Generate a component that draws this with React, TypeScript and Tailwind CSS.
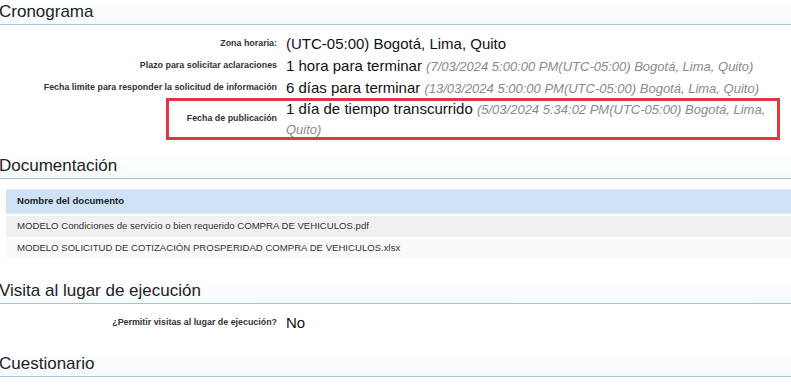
import React from "react";

const font = { fontFamily: '"Liberation Sans", Arial, sans-serif' };

function Title({ children }: { children: React.ReactNode }) {
  return (
    <div className="h-[25px] border-b border-[#9fc2cf] bg-gradient-to-b from-white to-[#f6fafc] text-[17px] leading-[24px] text-[#222] -ml-[1px]">
      {children}
    </div>
  );
}

function Row({ label, children }: { label: string; children: React.ReactNode }) {
  return (
    <div className="flex h-[22px] items-center">
      <div className="w-[277px] shrink-0 text-right text-[8.9px] font-bold text-[#333]">{label}</div>
      <div className="pl-[9px] text-[15px] text-[#111] whitespace-nowrap">{children}</div>
    </div>
  );
}

function Gray({ children }: { children: React.ReactNode }) {
  return <span className="text-[13px] italic text-[#8a8a8a]">{children}</span>;
}

export default function App() {
  return (
    <div className="w-[791px] h-[387px] overflow-hidden bg-white" style={font}>
      <Title>Cronograma</Title>
      <div className="pt-[8px]">
        <Row label="Zona horaria:">(UTC-05:00) Bogotá, Lima, Quito</Row>
        <Row label="Plazo para solicitar aclaraciones">
          1 hora para terminar <Gray>(7/03/2024 5:00:00 PM(UTC-05:00) Bogotá, Lima, Quito)</Gray>
        </Row>
        <Row label="Fecha limite para responder la solicitud de información">
          6 días para terminar <Gray>(13/03/2024 5:00:00 PM(UTC-05:00) Bogotá, Lima, Quito)</Gray>
        </Row>
        <div className="ml-[166px] w-[614px] -mt-[1px] h-[42px] border-[3px] border-[#e23546] flex items-center">
          <div className="w-[108px] shrink-0 text-right text-[8.9px] font-bold text-[#333]">Fecha de publicación</div>
          <div className="pl-[9px] pr-[8px] text-[15px] leading-[19px] text-[#111]">
            1 día de tiempo transcurrido <Gray>(5/03/2024 5:34:02 PM(UTC-05:00) Bogotá, Lima, Quito)</Gray>
          </div>
        </div>
      </div>
      <div className="mt-[14px]">
        <Title>Documentación</Title>
      </div>
      <div className="ml-[6px] mt-[10px]">
        <div className="h-[25px] bg-[#cde2f7] border-y border-[#dbe9f8] flex items-center pl-[11px] text-[9.6px] font-bold text-[#222]">
          Nombre del documento
        </div>
        <div className="mt-[2px] h-[21px] bg-[#f0f0f0] flex items-center pl-[11px] text-[9.6px] text-[#333]">
          MODELO Condiciones de servicio o bien requerido COMPRA DE VEHICULOS.pdf
        </div>
        <div className="mt-[1px] h-[20px] bg-[#f9f9f9] flex items-center pl-[11px] text-[9.6px] text-[#333]">
          MODELO SOLICITUD DE COTIZACIÓN PROSPERIDAD COMPRA DE VEHICULOS.xlsx
        </div>
      </div>
      <div className="mt-[21px]">
        <Title>Visita al lugar de ejecución</Title>
      </div>
      <div className="pt-[8px]">
        <Row label="¿Permitir visitas al lugar de ejecución?">No</Row>
      </div>
      <div className="mt-[18px]">
        <Title>Cuestionario</Title>
      </div>
    </div>
  );
}
